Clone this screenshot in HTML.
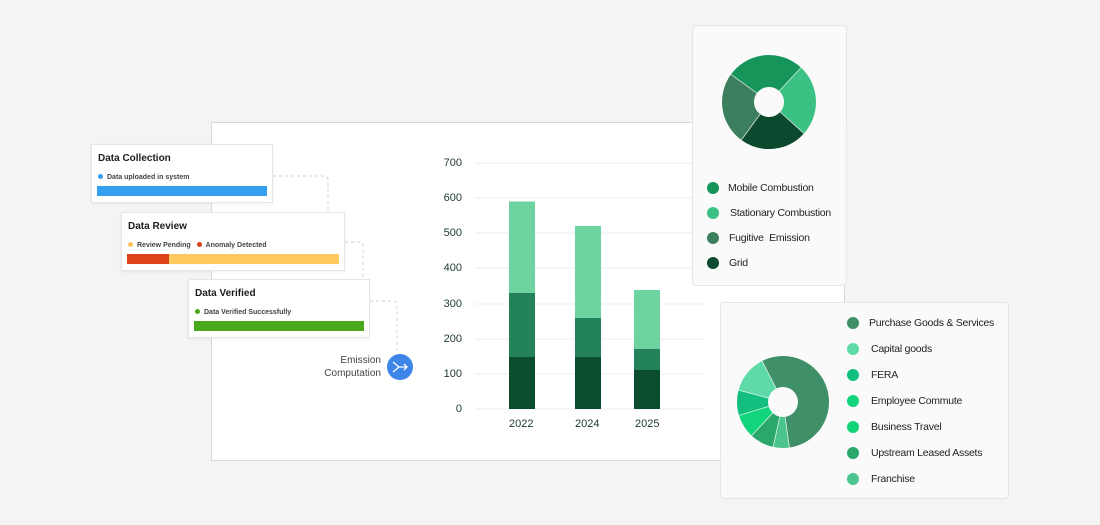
<!DOCTYPE html>
<html><head><meta charset="utf-8"><style>
*{margin:0;padding:0;box-sizing:border-box}
body{width:1100px;height:525px;background:#f4f4f4;position:relative;overflow:hidden;font-family:"Liberation Sans",sans-serif;color:#1c1c1c}
.abs{position:absolute}
.panel{left:211px;top:122px;width:634px;height:339px;background:#fff;border:1px solid #d8d8d8}
.card{background:#fff;border:1px solid #e6e6e6;box-shadow:0 1px 3px rgba(0,0,0,.06)}
.card h4{position:absolute;left:6px;top:8px;font-size:10px;font-weight:bold}
.lg{position:absolute;font-size:7px;color:#444;font-weight:bold;white-space:nowrap}
.dot{display:inline-block;width:5px;height:5px;border-radius:50%;margin-right:4px;vertical-align:0}
.yl{position:absolute;width:30px;text-align:right;font-size:11px;color:#1d3a2c;left:432px}
.xl{position:absolute;font-size:11px;color:#1d3a2c}
.gc{background:rgba(250,250,250,.92);border:1px solid #e2e6e4;border-radius:4px}
.li{position:absolute;font-size:10.5px;letter-spacing:-0.25px;color:#222;white-space:nowrap}
.li i{position:absolute;width:12px;height:12px;border-radius:50%;top:0}
</style></head><body>
<div class="abs panel"></div>
<svg class="abs" style="left:0;top:0" width="1100" height="525">
<g stroke="#eeeeee" stroke-width="1">
<line x1="475" y1="163" x2="705" y2="163"/><line x1="475" y1="198" x2="705" y2="198"/><line x1="475" y1="233" x2="705" y2="233"/><line x1="475" y1="268" x2="705" y2="268"/><line x1="475" y1="304" x2="705" y2="304"/><line x1="475" y1="339" x2="705" y2="339"/><line x1="475" y1="374" x2="705" y2="374"/><line x1="475" y1="409" x2="705" y2="409"/>
</g>
<rect x="509" y="201.5" width="26" height="91.5" fill="#6dd3a0"/><rect x="509" y="293" width="26" height="64" fill="#23825a"/><rect x="509" y="357" width="26" height="52" fill="#0a4d2f"/>
<rect x="575" y="226" width="26" height="92" fill="#6dd3a0"/><rect x="575" y="318" width="26" height="39" fill="#23825a"/><rect x="575" y="357" width="26" height="52" fill="#0a4d2f"/>
<rect x="634" y="290" width="26" height="59" fill="#6dd3a0"/><rect x="634" y="349" width="26" height="21" fill="#23825a"/><rect x="634" y="370" width="26" height="39" fill="#0a4d2f"/>
<g fill="none" stroke="#d0d0d0" stroke-dasharray="3 3">
<path d="M273 176 H324 Q328 176 328 180 V212"/>
<path d="M345 242 H359 Q363 242 363 246 V279"/>
<path d="M370 301 H393 Q397 301 397 305 V353"/>
</g>
<circle cx="400" cy="367" r="13" fill="#3d85e8"/>
<path d="M393 362 L399 367 L393 372 M399 367 H407 M404 364 L407 367 L404 370" stroke="#fff" stroke-width="1.3" fill="none"/>
</svg>
<div class="yl" style="top:157px">700</div><div class="yl" style="top:192px">600</div><div class="yl" style="top:227px">500</div><div class="yl" style="top:262px">400</div><div class="yl" style="top:298px">300</div><div class="yl" style="top:333px">200</div><div class="yl" style="top:368px">100</div><div class="yl" style="top:403px">0</div>
<div class="xl" style="left:509px;top:418px">2022</div><div class="xl" style="left:575px;top:418px">2024</div><div class="xl" style="left:635px;top:418px">2025</div>
<div class="abs" style="left:300px;top:354px;width:81px;text-align:right;font-size:10px;color:#444;line-height:13px">Emission<br>Computation</div>

<div class="abs card" style="left:91px;top:144px;width:182px;height:59px"><h4>Data Collection</h4>
<div class="lg" style="left:6px;top:29px"><span class="dot" style="background:#3a9ef0"></span>Data uploaded in system</div>
<div class="abs" style="left:5px;top:41px;width:170px;height:10px;background:#36a0f0"></div></div>
<div class="abs card" style="left:121px;top:212px;width:224px;height:59px"><h4>Data Review</h4>
<div class="lg" style="left:6px;top:29px"><span class="dot" style="background:#fdc55c"></span>Review Pending &nbsp; <span class="dot" style="background:#d9411b"></span>Anomaly Detected</div>
<div class="abs" style="left:5px;top:41px;width:212px;height:10px;background:#ffc95f"></div>
<div class="abs" style="left:5px;top:41px;width:42px;height:10px;background:#dc4417"></div></div>
<div class="abs card" style="left:188px;top:279px;width:182px;height:59px"><h4>Data Verified</h4>
<div class="lg" style="left:6px;top:29px"><span class="dot" style="background:#4aa81c"></span>Data Verified Successfully</div>
<div class="abs" style="left:5px;top:41px;width:170px;height:10px;background:#4aa81c"></div></div>

<div class="abs gc" style="left:692px;top:25px;width:155px;height:261px"></div>
<svg class="abs" style="left:0;top:0" width="1100" height="525">
<g fill="none" stroke-width="32">
<circle cx="769" cy="102" r="31" stroke="#16955a" stroke-dasharray="52.5 999" transform="rotate(216 769 102)"/>
<circle cx="769" cy="102" r="31" stroke="#3cc184" stroke-dasharray="48.2 999" transform="rotate(313 769 102)"/>
<circle cx="769" cy="102" r="31" stroke="#0b4a2e" stroke-dasharray="45.5 999" transform="rotate(42 769 102)"/>
<circle cx="769" cy="102" r="31" stroke="#3b7f5f" stroke-dasharray="48.7 999" transform="rotate(126 769 102)"/>
</g>
<g stroke="#ffffff" stroke-width="0.8" opacity="0.8">
<line x1="756.9" y1="93.2" x2="731" y2="74.4"/><line x1="779.2" y1="91" x2="801" y2="67.6"/><line x1="780.1" y1="112" x2="803.9" y2="133.4"/><line x1="760.2" y1="114.1" x2="741.4" y2="140"/>
</g>
</svg>
<div class="li" style="left:707px;top:182px"><i style="background:#16955a"></i><span style="margin-left:21px">Mobile Combustion</span></div>
<div class="li" style="left:707px;top:207px"><i style="background:#3cc184"></i><span style="margin-left:23px">Stationary Combustion</span></div>
<div class="li" style="left:707px;top:232px"><i style="background:#3b7f5f"></i><span style="margin-left:22px">Fugitive&nbsp; Emission</span></div>
<div class="li" style="left:707px;top:257px"><i style="background:#0b4a2e"></i><span style="margin-left:22px">Grid</span></div>

<div class="abs gc" style="left:720px;top:302px;width:289px;height:197px"></div>
<svg class="abs" style="left:0;top:0" width="1100" height="525">
<g fill="none" stroke-width="31">
<circle cx="783" cy="402" r="30.5" stroke="#3f8f68" stroke-dasharray="105.9 999" transform="rotate(-117 783 402)"/>
<circle cx="783" cy="402" r="30.5" stroke="#4cc48d" stroke-dasharray="10.9 999" transform="rotate(82 783 402)"/>
<circle cx="783" cy="402" r="30.5" stroke="#2aa86c" stroke-dasharray="16.2 999" transform="rotate(102.5 783 402)"/>
<circle cx="783" cy="402" r="30.5" stroke="#12d47a" stroke-dasharray="16 999" transform="rotate(133 783 402)"/>
<circle cx="783" cy="402" r="30.5" stroke="#13bf7e" stroke-dasharray="17 999" transform="rotate(163 783 402)"/>
<circle cx="783" cy="402" r="30.5" stroke="#5ddaa8" stroke-dasharray="25.5 999" transform="rotate(195 783 402)"/>
</g>
<g stroke="#ffffff" stroke-width="0.8" opacity="0.8">
<line x1="776.2" y1="388.6" x2="762.1" y2="361"/><line x1="785.1" y1="416.9" x2="789.4" y2="447.5"/><line x1="779.8" y1="416.6" x2="773.1" y2="446.9"/><line x1="772.8" y1="413" x2="751.6" y2="435.6"/><line x1="768.7" y1="406.4" x2="739" y2="415.4"/><line x1="768.5" y1="398.1" x2="738.6" y2="390.1"/>
</g>
</svg>
<div class="li" style="left:847px;top:317px"><i style="background:#3f8f68"></i><span style="margin-left:22px">Purchase Goods &amp; Services</span></div>
<div class="li" style="left:847px;top:343px"><i style="background:#5ddaa8"></i><span style="margin-left:24px">Capital goods</span></div>
<div class="li" style="left:847px;top:369px"><i style="background:#13bf7e"></i><span style="margin-left:24px">FERA</span></div>
<div class="li" style="left:847px;top:395px"><i style="background:#12d47a"></i><span style="margin-left:24px">Employee Commute</span></div>
<div class="li" style="left:847px;top:421px"><i style="background:#14d47a"></i><span style="margin-left:24px">Business Travel</span></div>
<div class="li" style="left:847px;top:447px"><i style="background:#2aa86c"></i><span style="margin-left:24px">Upstream Leased Assets</span></div>
<div class="li" style="left:847px;top:473px"><i style="background:#4cc48d"></i><span style="margin-left:24px">Franchise</span></div>
</body></html>
